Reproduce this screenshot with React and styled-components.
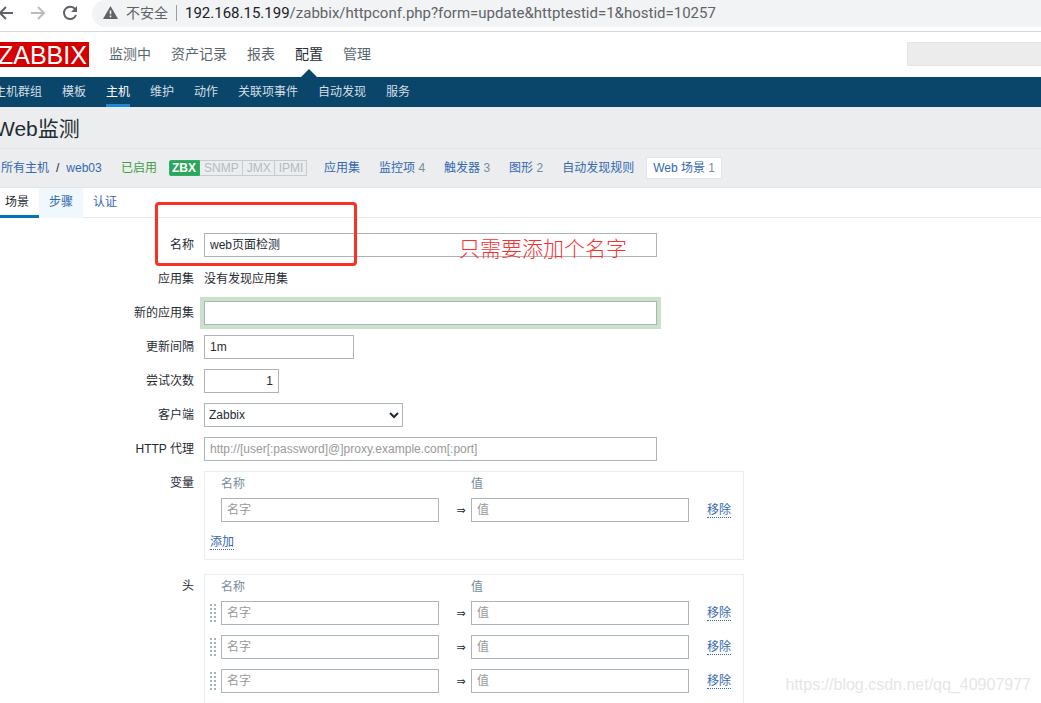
import React from 'react';
import styled, { createGlobalStyle } from 'styled-components';

const GlobalStyle = createGlobalStyle`
  *, *::before, *::after { box-sizing: border-box; }
  body {
    margin: 0;
    background: #fff;
    color: #1f2c33;
    font: 12px/18px "Liberation Sans", "Noto Sans CJK SC", sans-serif;
  }
  a { color: #3568ae; text-decoration: none; }
  input, select, button { font: inherit; color: inherit; }
`;

const Shell = styled.div`
  position: relative;
  height: 100vh;
  overflow: hidden;
`;

/* Browser bar */
const BrowserBar = styled.div`
  display: flex;
  align-items: flex-start;
  height: 32px;
  border-bottom: 1px solid #d5d7da;
`;

const BrowserButtons = styled.div`
  display: flex;
  gap: 12px;
  width: 96px;
  flex: none;
  padding-top: 3px;
  margin-left: -4px;
`;

const IconButton = styled.button`
  display: flex;
  width: 20px;
  height: 20px;
  padding: 0;
  border: 0;
  background: none;
  color: ${(p) => (p.$dim ? '#babcbe' : '#5f6368')};
`;

const AddressBar = styled.div`
  display: flex;
  align-items: center;
  flex: 1;
  height: 27px;
  padding: 0 0 2px 11px;
  background: #f1f3f4;
  border-radius: 14px 0 0 14px;
  color: #5f6368;
  font-size: 14px;
`;

const SecurityNote = styled.span`
  margin-left: 8px;
  padding-right: 8px;
  line-height: 16px;
  border-right: 1px solid #9a9da1;
`;

const Url = styled.span`
  margin-left: 8px;
  font-family: Roboto, "Open Sans", sans-serif;
  font-size: 15px;
  color: #5f6368;
  white-space: nowrap;

  b { font-weight: 400; color: #202124; }
`;

/* Site header */
const Header = styled.header`
  display: flex;
  align-items: flex-start;
  height: 45px;
`;

const Logo = styled.a`
  flex: none;
  width: 93px;
  height: 25px;
  margin: 10px 0 0 -4px;
  padding-left: 2px;
  background: #d40000;
  color: #fff;
  font: 25px/26px "Liberation Sans", sans-serif;
`;

const MainNav = styled.nav`
  display: flex;
  gap: 20px;
  flex: 1;
  height: 45px;
  margin-left: 20px;
`;

const MainLink = styled.a`
  position: relative;
  color: ${(p) => (p.$active ? '#1f2c33' : '#57656d')};
  font-size: 14px;
  line-height: 44px;

  &::after {
    content: ${(p) => (p.$active ? '""' : 'none')};
    position: absolute;
    left: 50%;
    bottom: 0;
    margin-left: -8px;
    border: 8px solid transparent;
    border-top: 0;
    border-bottom-color: #0a466a;
  }
`;

const SearchBox = styled.input`
  width: 134px;
  height: 24px;
  margin-top: 10px;
  border: 1px solid #e4e4e4;
  border-right: 0;
  border-radius: 2px 0 0 2px;
  background: #ececec;
`;

const SubNav = styled.nav`
  display: flex;
  gap: 20px;
  height: 30px;
  padding: 0 10px;
  margin-left: -16px;
  background: #0a466a;
`;

const SubLink = styled.a`
  height: 30px;
  line-height: 31px;
  color: ${(p) => (p.$active ? '#fff' : '#d3dee4')};
  border-bottom: 3px solid ${(p) => (p.$active ? '#1a86d4' : 'transparent')};
  white-space: nowrap;
`;

/* Title and host navigation */
const TitleBar = styled.div`
  height: 42px;
  margin-left: -5px;
  background: #ebedee;
  border-bottom: 1px solid #dfe4e7;
`;

const Title = styled.h1`
  margin: 0;
  font-size: 21px;
  font-weight: 400;
  line-height: 44px;
`;

const HostNav = styled.nav`
  display: flex;
  align-items: center;
  height: 39px;
  padding-left: 1px;
  background: #ebedee;
  border-bottom: 1px solid #dfe4e7;
  white-space: nowrap;
`;

const Crumbs = styled.div`
  display: flex;
  gap: 7px;
  width: 120px;
`;

const Enabled = styled.span`
  width: 48px;
  color: #429e47;
`;

const Statuses = styled.div`
  display: flex;
  height: 16px;
  width: 138px;
`;

const Status = styled.span`
  padding: ${(p) => (p.$on ? '0 3px 0 2px' : '0 3px 0 4px')};
  border: 1px solid ${(p) => (p.$on ? '#34af67' : '#c4ccd0')};
  border-left-width: ${(p) => (p.$on ? '1px' : '0')};
  border-radius: ${(p) => (p.$on ? '2px 0 0 2px' : '0')};
  background: ${(p) => (p.$on ? '#2aa75a' : 'transparent')};
  color: ${(p) => (p.$on ? '#fff' : '#b4bcc0')};
  font-weight: ${(p) => (p.$on ? 700 : 400)};
  line-height: 15px;
`;

const HostLinks = styled.div`
  display: flex;
  align-items: center;
  gap: 5px;
  margin-left: 10px;
`;

const HostLink = styled.a`
  height: 22px;
  padding: 0 6px;
  border: 1px solid ${(p) => (p.$active ? '#dfe4e7' : 'transparent')};
  border-radius: 2px;
  background: ${(p) => (p.$active ? '#fff' : 'transparent')};
  line-height: 20px;

  span { color: #768d99; }
`;

/* Tabs */
const Tabs = styled.div`
  display: flex;
  height: 30px;
  margin-left: -5px;
  border-bottom: 1px solid #e5e8ea;
`;

const Tab = styled.a`
  height: 30px;
  padding: 0 10px;
  line-height: 29px;
  background: ${(p) => (p.$hover ? '#f0f7fd' : 'transparent')};
  color: ${(p) => (p.$active ? '#1f2c33' : '#3568ae')};
  border-bottom: 3px solid ${(p) => (p.$active ? '#0275b8' : 'transparent')};
`;

/* Form */
const Form = styled.form`
  display: flex;
  flex-direction: column;
  gap: 10px;
  padding-top: 15px;
`;

const Row = styled.div`
  position: relative;
  display: grid;
  grid-template-columns: 194px minmax(0, 1fr);
  column-gap: 10px;
  min-height: 24px;
  line-height: 24px;
  margin-bottom: ${(p) => (p.$block ? '4px' : '0')};
`;

const Label = styled.label`
  text-align: right;
`;

const Input = styled.input`
  width: ${(p) => p.$width};
  height: 24px;
  padding: 0 5px;
  border: 1px solid #acb4ba;
  border-radius: 0;
  background: #fff;
  outline: 0;
  text-align: ${(p) => (p.$number ? 'right' : 'left')};
  box-shadow: ${(p) => (p.$focused ? '0 0 0 4px #c8e2cb' : 'none')};

  &::placeholder { color: #999; opacity: 1; }
`;

const Select = styled.select`
  width: 199px;
  height: 24px;
  padding: 0;
  border: 1px solid #acb4ba;
  border-radius: 0;
  background: #fff;
`;

const Highlight = styled.div`
  position: absolute;
  left: 155px;
  top: -31px;
  width: 202px;
  height: 64px;
  border: 3px solid #fb3021;
  border-radius: 4px;
  pointer-events: none;
`;

const Note = styled.div`
  position: absolute;
  left: 459px;
  top: 1px;
  color: #fb3030;
  font-size: 21px;
  font-weight: 300;
  line-height: 30px;
  white-space: nowrap;
`;

const Pairs = styled.div`
  width: 540px;
  padding: 4px 5px 3px;
  border: 1px solid #ebeef0;
`;

const PairTable = styled.table`
  border-collapse: collapse;
  table-layout: fixed;
  width: 100%;

  th {
    height: 17px;
    padding: 0;
    color: #768d99;
    font-weight: 400;
    line-height: 17px;
    text-align: left;
  }
  td {
    height: 34px;
    padding: 0;
    line-height: 24px;
    vertical-align: middle;
  }
  td > input { display: block; }
`;

const Arrow = styled.td`
  text-align: center;

  span {
    margin-left: 12px;
    font-family: "DejaVu Sans", sans-serif;
    font-size: 11px;
  }
`;

const TextButton = styled.button`
  display: block;
  height: 16px;
  margin-left: ${(p) => (p.$indent ? '18px' : '0')};
  padding: 0;
  border: 0;
  border-bottom: 1px dotted #3568ae;
  background: none;
  color: #3568ae;
  line-height: 17px;
`;

const AddRow = styled.div`
  padding: 7px 0 6px;
`;

const Spacer = styled.div`
  height: 24px;
`;

const Grip = styled.svg`
  display: block;
`;

const Watermark = styled.div`
  position: absolute;
  right: 10px;
  bottom: 8px;
  color: #e6e6e6;
  font-size: 16px;
  line-height: 20px;
`;

function DragHandle() {
  return (
    <Grip width="6" height="18" fill="#a3b5bc" aria-hidden="true">
      {[0, 4, 8, 12, 16].map((y) => (
        <React.Fragment key={y}>
          <rect x="0" y={y} width="2" height="2" />
          <rect x="4" y={y} width="2" height="2" />
        </React.Fragment>
      ))}
    </Grip>
  );
}

function PairList({ rows, sortable, children }) {
  return (
    <Pairs>
      <PairTable>
        <colgroup>
          <col style={{ width: 11 }} />
          <col style={{ width: 218 }} />
          <col style={{ width: 32 }} />
          <col style={{ width: 218 }} />
          <col />
        </colgroup>
        <thead>
          <tr>
            <th />
            <th>名称</th>
            <th />
            <th>值</th>
            <th />
          </tr>
        </thead>
        <tbody>
          {Array.from({ length: rows }, (_, i) => (
            <tr key={i}>
              <td>{sortable && <DragHandle />}</td>
              <td><Input $width="100%" placeholder="名字" aria-label="名称" /></td>
              <Arrow><span>⇒</span></Arrow>
              <td><Input $width="100%" placeholder="值" aria-label="值" /></td>
              <td><TextButton type="button" $indent>移除</TextButton></td>
            </tr>
          ))}
        </tbody>
      </PairTable>
      {children}
    </Pairs>
  );
}

const mainLinks = ['监测中', '资产记录', '报表', '配置', '管理'];
const subLinks = ['主机群组', '模板', '主机', '维护', '动作', '关联项事件', '自动发现', '服务'];
const hostLinks = [
  ['应用集'],
  ['监控项', 4],
  ['触发器', 3],
  ['图形', 2],
  ['自动发现规则'],
  ['Web 场景', 1],
];

export default function App() {
  return (
    <Shell>
      <GlobalStyle />
      <BrowserBar>
        <BrowserButtons>
          <IconButton aria-label="后退">
            <svg width="20" height="20" viewBox="0 0 20 20" fill="none" stroke="currentColor" strokeWidth="2">
              <path d="M17 10H4M10 4L4 10L10 16" />
            </svg>
          </IconButton>
          <IconButton aria-label="前进" $dim>
            <svg width="20" height="20" viewBox="0 0 20 20" fill="none" stroke="currentColor" strokeWidth="2">
              <path d="M3 10H16M10 4L16 10L10 16" />
            </svg>
          </IconButton>
          <IconButton aria-label="刷新">
            <svg width="20" height="20" viewBox="0 0 20 20" fill="none" stroke="currentColor" strokeWidth="2">
              <path d="M15.2 6.2A6.2 6.2 0 1 0 16 12" />
              <path d="M17 3V9H11Z" fill="currentColor" stroke="none" />
            </svg>
          </IconButton>
        </BrowserButtons>
        <AddressBar>
          <svg width="15" height="13" viewBox="0 0 15 13" aria-hidden="true">
            <path d="M7.5 0L15 13H0Z" fill="#5f6368" />
            <path d="M6.7 4.5H8.3V8.3H6.7ZM6.7 9.6H8.3V11.2H6.7Z" fill="#f1f3f4" />
          </svg>
          <SecurityNote>不安全</SecurityNote>
          <Url><b>192.168.15.199</b>/zabbix/httpconf.php?form=update&amp;httptestid=1&amp;hostid=10257</Url>
        </AddressBar>
      </BrowserBar>

      <Header>
        <Logo href="#">ZABBIX</Logo>
        <MainNav>
          {mainLinks.map((t) => (
            <MainLink href="#" key={t} $active={t === '配置'}>{t}</MainLink>
          ))}
        </MainNav>
        <SearchBox aria-label="搜索" />
      </Header>
      <SubNav>
        {subLinks.map((t) => (
          <SubLink href="#" key={t} $active={t === '主机'}>{t}</SubLink>
        ))}
      </SubNav>

      <TitleBar><Title>Web监测</Title></TitleBar>
      <HostNav>
        <Crumbs>
          <a href="#">所有主机</a>
          <span>/</span>
          <a href="#">web03</a>
        </Crumbs>
        <Enabled>已启用</Enabled>
        <Statuses>
          <Status $on>ZBX</Status>
          <Status>SNMP</Status>
          <Status>JMX</Status>
          <Status>IPMI</Status>
        </Statuses>
        <HostLinks>
          {hostLinks.map(([t, n]) => (
            <HostLink href="#" key={t} $active={t === 'Web 场景'}>
              {t}{n && <span> {n}</span>}
            </HostLink>
          ))}
        </HostLinks>
      </HostNav>

      <Tabs>
        <Tab href="#" $active>场景</Tab>
        <Tab href="#" $hover>步骤</Tab>
        <Tab href="#">认证</Tab>
      </Tabs>

      <Form>
        <Row>
          <Label htmlFor="name">名称</Label>
          <Input id="name" $width="453px" defaultValue="web页面检测" />
          <Highlight />
          <Note>只需要添加个名字</Note>
        </Row>
        <Row>
          <Label as="span">应用集</Label>
          <span>没有发现应用集</span>
        </Row>
        <Row>
          <Label htmlFor="new-app">新的应用集</Label>
          <Input id="new-app" $width="453px" $focused />
        </Row>
        <Row>
          <Label htmlFor="delay">更新间隔</Label>
          <Input id="delay" $width="150px" defaultValue="1m" />
        </Row>
        <Row>
          <Label htmlFor="retries">尝试次数</Label>
          <Input id="retries" $width="75px" $number defaultValue="1" />
        </Row>
        <Row>
          <Label htmlFor="agent">客户端</Label>
          <Select id="agent"><option>Zabbix</option></Select>
        </Row>
        <Row>
          <Label htmlFor="proxy">HTTP 代理</Label>
          <Input id="proxy" $width="453px" placeholder="http://[user[:password]@]proxy.example.com[:port]" />
        </Row>
        <Row $block>
          <Label as="span">变量</Label>
          <PairList rows={1}>
            <AddRow><TextButton type="button">添加</TextButton></AddRow>
          </PairList>
        </Row>
        <Row>
          <Label as="span">头</Label>
          <PairList rows={3} sortable>
            <Spacer />
          </PairList>
        </Row>
      </Form>
      <Watermark>https://blog.csdn.net/qq_40907977</Watermark>
    </Shell>
  );
}
